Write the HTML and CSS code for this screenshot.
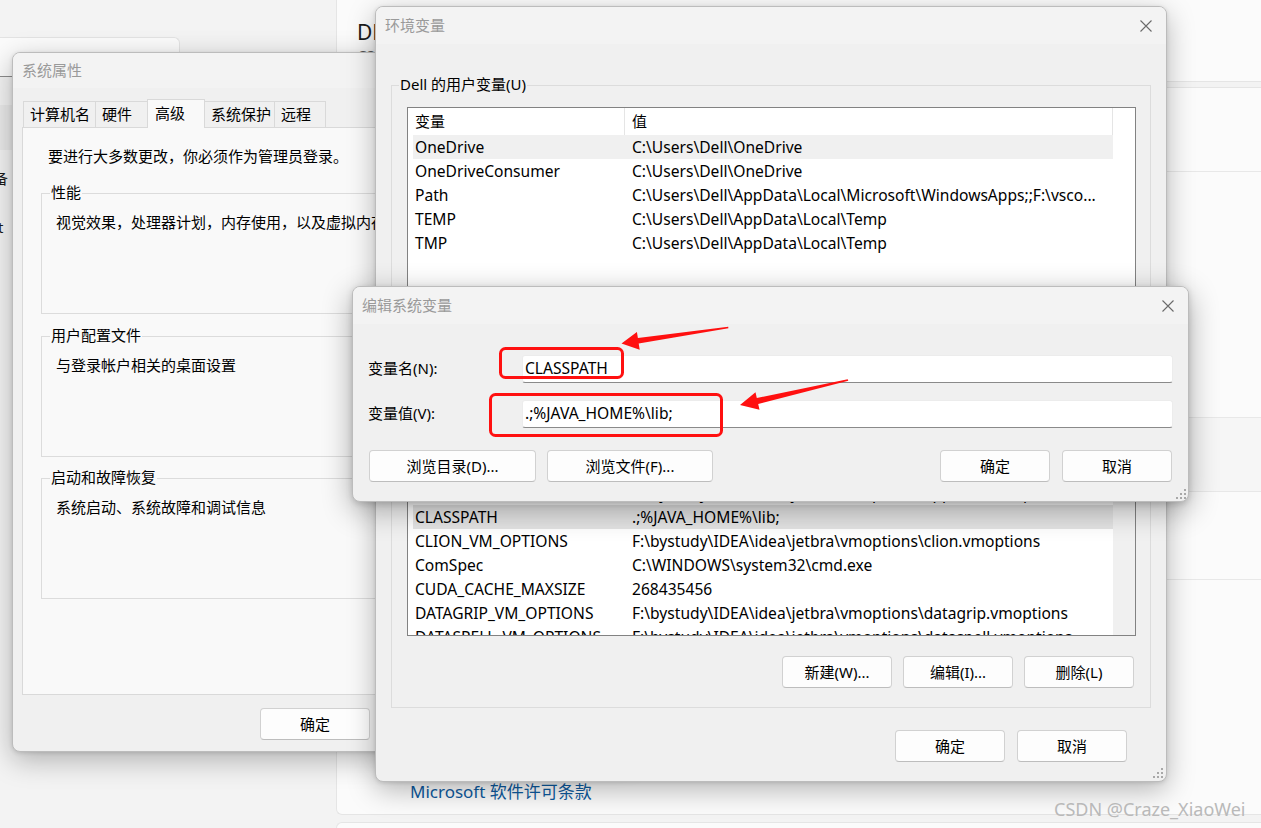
FILE: index.html
```html
<!DOCTYPE html>
<html lang="zh-CN">
<head>
<meta charset="utf-8">
<title>环境变量</title>
<link rel="stylesheet" href="styles.css">
</head>
<body>
<div class="screen">
  <div class="settings">
    <aside class="nav">
      <div class="search"></div>
      <div class="nav-sel"></div>
      <div class="nav-text a">备</div>
      <div class="nav-text b">t</div>
    </aside>
    <main class="main">
      <section class="card dev">
        <div class="dev-name">DESKTOP-8K2L0QF</div>
        <div class="dev-sub">G3 3590</div>
      </section>
      <section class="card spec">
        <div class="spec-row r1"></div>
        <div class="spec-row r2"></div>
        <div class="spec-row r3"></div>
        <div class="spec-row r4"></div>
        <div class="spec-row r5 link-row"><span class="link">Microsoft 软件许可条款</span></div>
      </section>
      <section class="card next"></section>
    </main>
  </div>

  <!-- 系统属性 -->
  <div class="win sp">
    <div class="titlebar sp-title"><span>系统属性</span></div>
    <div class="sp-body">
      <div class="tabs">
        <div class="tab t1">计算机名</div>
        <div class="tab t2">硬件</div>
        <div class="tab t3 sel">高级</div>
        <div class="tab t4">系统保护</div>
        <div class="tab t5">远程</div>
      </div>
      <div class="tab-panel">
        <div class="note">要进行大多数更改，你必须作为管理员登录。</div>
        <div class="grp g1">
          <div class="grp-label">性能</div>
          <div class="grp-text">视觉效果，处理器计划，内存使用，以及虚拟内存</div>
        </div>
        <div class="grp g2">
          <div class="grp-label">用户配置文件</div>
          <div class="grp-text">与登录帐户相关的桌面设置</div>
        </div>
        <div class="grp g3">
          <div class="grp-label">启动和故障恢复</div>
          <div class="grp-text">系统启动、系统故障和调试信息</div>
        </div>
      </div>
      <div class="sp-buttons">
        <div class="btn">确定</div>
        <div class="btn">取消</div>
        <div class="btn">应用(A)</div>
      </div>
    </div>
  </div>

  <!-- 环境变量 -->
  <div class="win env">
    <div class="titlebar"><span>环境变量</span>
      <svg class="x" viewBox="0 0 12 12"><path d="M0.5 0.5L11.5 11.5M11.5 0.5L0.5 11.5" stroke="#6a6a6a" stroke-width="1.1" fill="none"/></svg>
    </div>
    <div class="env-body">
      <div class="egrp eg1">
        <div class="egrp-label">Dell 的用户变量(U)</div>
        <div class="lv user">
          <div class="lv-main">
            <div class="lv-head"><div class="lv-h1">变量</div><div class="lv-h2">值</div></div>
            <div class="lv-body">
              <div class="lv-row sel"><span class="c1">OneDrive</span><span class="c2">C:\Users\Dell\OneDrive</span></div>
              <div class="lv-row"><span class="c1">OneDriveConsumer</span><span class="c2">C:\Users\Dell\OneDrive</span></div>
              <div class="lv-row"><span class="c1">Path</span><span class="c2">C:\Users\Dell\AppData\Local\Microsoft\WindowsApps;;F:\vsco...</span></div>
              <div class="lv-row"><span class="c1">TEMP</span><span class="c2">C:\Users\Dell\AppData\Local\Temp</span></div>
              <div class="lv-row"><span class="c1">TMP</span><span class="c2">C:\Users\Dell\AppData\Local\Temp</span></div>
            </div>
          </div>
          <div class="lv-scroll"></div>
        </div>
        <div class="grp-buttons">
          <div class="btn">新建(N)...</div>
          <div class="btn">编辑(E)...</div>
          <div class="btn">删除(D)</div>
        </div>
      </div>
      <div class="egrp eg2">
        <div class="egrp-label">系统变量(S)</div>
        <div class="lv sys">
          <div class="lv-main">
            <div class="lv-head"><div class="lv-h1">变量</div><div class="lv-h2">值</div></div>
            <div class="lv-body">
              <div class="lv-row"><span class="c1">ALLUSERSPROFILE</span><span class="c2">C:\ProgramData</span></div>
              <div class="lv-row"><span class="c1">ANDROID_HOME</span><span class="c2">F:\Android\Sdk</span></div>
              <div class="lv-row"><span class="c1">APPCODE_VM_OPTIONS</span><span class="c2">F:\bystudy\IDEA\idea\jetbra\vmoptions\appcode.vmoptions</span></div>
              <div class="lv-row sel2"><span class="c1">CLASSPATH</span><span class="c2">.;%JAVA_HOME%\lib;</span></div>
              <div class="lv-row"><span class="c1">CLION_VM_OPTIONS</span><span class="c2">F:\bystudy\IDEA\idea\jetbra\vmoptions\clion.vmoptions</span></div>
              <div class="lv-row"><span class="c1">ComSpec</span><span class="c2">C:\WINDOWS\system32\cmd.exe</span></div>
              <div class="lv-row"><span class="c1">CUDA_CACHE_MAXSIZE</span><span class="c2">268435456</span></div>
              <div class="lv-row"><span class="c1">DATAGRIP_VM_OPTIONS</span><span class="c2">F:\bystudy\IDEA\idea\jetbra\vmoptions\datagrip.vmoptions</span></div>
              <div class="lv-row"><span class="c1">DATASPELL_VM_OPTIONS</span><span class="c2">F:\bystudy\IDEA\idea\jetbra\vmoptions\dataspell.vmoptions</span></div>
            </div>
          </div>
          <div class="lv-scroll"></div>
        </div>
        <div class="grp-buttons">
          <div class="btn">新建(W)...</div>
          <div class="btn">编辑(I)...</div>
          <div class="btn">删除(L)</div>
        </div>
      </div>
      <div class="dlg-buttons env-buttons">
        <div class="btn">确定</div>
        <div class="btn">取消</div>
      </div>
    </div>
    <svg class="grip env-grip" viewBox="0 0 12 12"><g fill="#a8a8a8"><rect x="9" y="1" width="2" height="2"/><rect x="5" y="5" width="2" height="2"/><rect x="9" y="5" width="2" height="2"/><rect x="1" y="9" width="2" height="2"/><rect x="5" y="9" width="2" height="2"/><rect x="9" y="9" width="2" height="2"/></g></svg>
  </div>

  <!-- 编辑系统变量 -->
  <div class="win edit">
    <div class="titlebar"><span>编辑系统变量</span>
      <svg class="x" viewBox="0 0 12 12"><path d="M0.5 0.5L11.5 11.5M11.5 0.5L0.5 11.5" stroke="#6a6a6a" stroke-width="1.1" fill="none"/></svg>
    </div>
    <div class="edit-body">
      <div class="field">
        <div class="field-label">变量名(N):</div>
        <div class="field-input">CLASSPATH</div>
      </div>
      <div class="field f2">
        <div class="field-label">变量值(V):</div>
        <div class="field-input">.;%JAVA_HOME%\lib;</div>
      </div>
      <div class="edit-buttons">
        <div class="btn wide1">浏览目录(D)...</div>
        <div class="btn wide2">浏览文件(F)...</div>
        <div class="spacer"></div>
        <div class="btn">确定</div>
        <div class="btn">取消</div>
      </div>
    </div>
    <svg class="grip edit-grip" viewBox="0 0 12 12"><g fill="#a8a8a8"><rect x="9" y="1" width="2" height="2"/><rect x="5" y="5" width="2" height="2"/><rect x="9" y="5" width="2" height="2"/><rect x="1" y="9" width="2" height="2"/><rect x="5" y="9" width="2" height="2"/><rect x="9" y="9" width="2" height="2"/></g></svg>
  </div>

  <svg class="marks" viewBox="0 0 1261 828" width="1261" height="828">
    <rect x="500.5" y="348.5" width="122" height="29" rx="5" fill="none" stroke="#ff1010" stroke-width="3"/>
    <rect x="490.5" y="394.5" width="231" height="41" rx="5" fill="none" stroke="#ff1010" stroke-width="3"/>
    <polygon fill="#ff1010" points="621.5,343.5 639.7,349.7 638.7,343.6 728.4,328.2 728.2,326.8 637.9,338 636.9,331.9"/>
    <polygon fill="#ff1010" points="740,405 759.5,409.8 758.2,403.9 848.3,380.8 847.7,379.2 756.8,398.1 755.5,392.2"/>
  </svg>

  <div class="wm">CSDN @Craze_XiaoWei</div>
</div>
</body>
</html>
```

FILE: styles.css
```css
html, body {
  margin: 0;
  padding: 0;
}
body {
  width: 1261px;
  height: 828px;
  overflow: hidden;
  font-family: "Noto Sans", "Noto Sans CJK SC", sans-serif;
  font-size: 15px;
  color: #000;
  background: #f3f3f3;
}
.screen {
  position: relative;
  width: 1261px;
  height: 828px;
  overflow: hidden;
}

/* ---------- background settings app ---------- */
.settings {
  display: flex;
  height: 100%;
}
.nav {
  width: 336px;
  flex: none;
  padding-top: 37px;
  box-sizing: border-box;
}
.search {
  width: 180px;
  height: 40px;
  box-sizing: border-box;
  background: #fbfbfb;
  border: 1px solid #e3e3e3;
  border-left: 0;
  border-bottom: 1px solid #8c8c8c;
  border-top-right-radius: 6px;
}
.nav-sel {
  margin-top: 28px;
  width: 200px;
  height: 45px;
  background: #eaeaea;
  border-radius: 0 5px 5px 0;
}
.nav-text {
  line-height: 20px;
  color: #1a1a1a;
  white-space: nowrap;
}
.nav-text.a { margin-top: 18px; margin-left: -7px; }
.nav-text.b { margin-top: 29px; margin-left: -2px; }

.main {
  flex: 1;
  display: flex;
  flex-direction: column;
}
.card {
  background: #fbfbfb;
  border: 1px solid #e5e5e5;
  border-right: 0;
  border-radius: 6px 0 0 6px;
  box-sizing: border-box;
  flex: none;
}
.dev {
  margin-top: -10px;
  height: 92px;
  padding: 27px 0 0 20px;
}
.dev-name {
  font-size: 21px;
  line-height: 28px;
  color: #1b1b1b;
  white-space: nowrap;
}
.dev-sub {
  font-size: 14px;
  line-height: 20px;
  color: #5d5d5d;
}
.spec {
  margin-top: 5px;
  height: 728px;
  display: flex;
  flex-direction: column;
}
.spec-row {
  box-sizing: border-box;
  border-bottom: 1px solid #e8e8e8;
  flex: none;
}
.r1 { height: 84px; }
.r2 { height: 246px; }
.r3 { height: 74px; background: #f6f6f6; }
.r4 { height: 88px; }
.r5 { flex: 1; border-bottom: 0; }
.link-row {
  display: flex;
  align-items: flex-end;
  padding: 0 0 10px 73px;
}
.link {
  font-size: 17px;
  line-height: 24px;
  color: #0e5a9e;
  white-space: nowrap;
}
.next {
  margin-top: 7px;
  height: 40px;
}

/* ---------- windows ---------- */
.win {
  position: absolute;
  box-sizing: border-box;
  background: #f0f0f0;
  border: 1px solid #bcbcbc;
  border-radius: 8px;
  box-shadow: 0 8px 28px rgba(0, 0, 0, 0.28), 0 1px 4px rgba(0, 0, 0, 0.12);
  overflow: hidden;
  display: flex;
  flex-direction: column;
}
.sp { left: 12px; top: 52px; width: 620px; height: 700px; }
.env { left: 375px; top: 6px; width: 792px; height: 776px; }
.edit { left: 352px; top: 286px; width: 837px; height: 216px; box-shadow: 0 8px 30px rgba(0, 0, 0, 0.32), 0 2px 6px rgba(0, 0, 0, 0.14); }

.titlebar {
  flex: none;
  box-sizing: border-box;
  height: 37px;
  background: #f3f3f3;
  display: flex;
  align-items: center;
  justify-content: space-between;
  padding: 0 14px 3px 9px;
  color: #9a9a9a;
  font-size: 15px;
}
.titlebar .x { margin-top: 3px; }
.sp-title { height: 35px; }
.x {
  width: 12px;
  height: 12px;
  display: block;
}
.grip {
  position: absolute;
  width: 12px;
  height: 12px;
}
.env-grip { right: 2px; bottom: 2px; }
.edit-grip { right: 1px; bottom: 1px; }

.btn {
  box-sizing: border-box;
  width: 110px;
  height: 32px;
  flex: none;
  background: #fdfdfd;
  border: 1px solid #d1d1d1;
  border-bottom-color: #bdbdbd;
  border-radius: 4px;
  display: flex;
  align-items: center;
  justify-content: center;
  padding-bottom: 1px;
  white-space: nowrap;
  color: #000;
}

/* ---------- system properties ---------- */
.sp-body {
  padding: 11px 9px 0 9px;
  display: flex;
  flex-direction: column;
}
.tabs {
  display: flex;
  align-items: flex-end;
  height: 28px;
  padding-left: 1px;
}
.tab {
  box-sizing: border-box;
  height: 26px;
  border: 1px solid #d9d9d9;
  border-bottom: 0;
  margin-right: -1px;
  padding: 0 0 2px 6px;
  display: flex;
  align-items: center;
  background: #f0f0f0;
  white-space: nowrap;
}
.tab.sel {
  height: 29px;
  margin-bottom: -1px;
  position: relative;
  z-index: 1;
  background: #f9f9f9;
  padding-left: 7px;
  padding-bottom: 4px;
}
.t1 { width: 73px; }
.t2 { width: 53px; }
.t3 { width: 58px; }
.t4 { width: 71px; }
.t5 { width: 52px; }
.tab-panel {
  box-sizing: border-box;
  height: 568px;
  background: #f9f9f9;
  border: 1px solid #d9d9d9;
  padding: 18px 18px 0 18px;
}
.note {
  padding-left: 7px;
  line-height: 20px;
  white-space: nowrap;
}
.grp {
  box-sizing: border-box;
  height: 121px;
  border: 1px solid #dcdcdc;
  padding: 0 8px;
}
.g1 { margin-top: 27px; }
.g2 { margin-top: 22px; }
.g3 { margin-top: 21px; }
.grp-label {
  width: fit-content;
  margin-top: -12px;
  padding: 0 1px;
  line-height: 20px;
  background: #f9f9f9;
}
.grp-text {
  margin-top: 10px;
  padding-left: 6px;
  line-height: 20px;
  white-space: nowrap;
}
.sp-buttons {
  margin-top: 13px;
  display: flex;
  justify-content: flex-end;
  gap: 12px;
  padding-right: 8px;
}

/* ---------- environment variables ---------- */
.env-body {
  padding: 0 15px 19px 15px;
  display: flex;
  flex-direction: column;
}
.egrp {
  border: 1px solid #dcdcdc;
  padding: 0 14px 19px 15px;
}
.eg1 { margin-top: 41px; }
.eg2 { margin-top: 18px; }
.egrp-label {
  width: fit-content;
  margin: -12px 0 0 -8px;
  padding: 0 1px;
  line-height: 20px;
  background: #f0f0f0;
  white-space: nowrap;
}
.lv {
  margin-top: 13px;
  box-sizing: border-box;
  border: 1px solid #828282;
  background: #fff;
  display: flex;
  overflow: hidden;
}
.lv.user { height: 186px; }
.lv.sys { height: 231px; }
.lv-main {
  width: 705px;
  flex: none;
}
.lv-scroll { flex: 1; }
.lv.sys .lv-scroll { background: #f0f0f0; }
.lv-head {
  display: flex;
  height: 27px;
  line-height: 27px;
  background: #fff;
}
.lv-h1 {
  width: 217px;
  box-sizing: border-box;
  padding-left: 7px;
  border-right: 1px solid #e5e5e5;
}
.lv-h2 {
  flex: 1;
  padding-left: 7px;
  border-right: 1px solid #e5e5e5;
}
.lv-body { padding-left: 5px; }
.lv-row {
  display: grid;
  grid-template-columns: 212px 488px;
  height: 24px;
  line-height: 24px;
  white-space: nowrap;
  overflow: hidden;
  font-size: 15.6px;
}
.lv-row.sel { background: #f0f0f0; }
.lv-row.sel2 { background: #e4e4e4; }
.c1 { padding-left: 2px; overflow: hidden; }
.c2 { padding-left: 7px; overflow: hidden; }
.grp-buttons {
  margin-top: 20px;
  display: flex;
  justify-content: flex-end;
  gap: 11px;
  padding-right: 2px;
}
.dlg-buttons {
  display: flex;
  justify-content: flex-end;
  gap: 12px;
}
.env-buttons {
  margin-top: 22px;
  margin-right: 24px;
}

/* ---------- edit dialog ---------- */
.edit-body {
  padding: 31px 15px 19px 15px;
  display: flex;
  flex-direction: column;
}
.field {
  display: flex;
  align-items: center;
  height: 28px;
}
.f2 { margin-top: 17px; }
.field-label {
  width: 154px;
  flex: none;
  padding-bottom: 4px;
  white-space: nowrap;
}
.field-input {
  flex: 1;
  box-sizing: border-box;
  height: 28px;
  background: #fff;
  border: 1px solid #ececec;
  border-bottom-color: #8a8a8a;
  border-radius: 3px;
  padding-left: 2px;
  line-height: 24px;
  font-size: 15.6px;
  white-space: nowrap;
}
.edit-buttons {
  margin-top: 22px;
  display: flex;
  gap: 11px;
  padding: 0 1px;
}
.edit-buttons .spacer { flex: 1; }
.wide1 { width: 167px; }
.wide2 { width: 166px; }
.edit-buttons .btn + .btn:last-child { margin-left: 1px; }

/* ---------- overlays ---------- */
.marks {
  position: absolute;
  left: 0;
  top: 0;
  pointer-events: none;
}
.wm {
  position: absolute;
  left: 1054px;
  top: 797px;
  font-family: "Noto Sans", sans-serif;
  font-size: 18px;
  line-height: 24px;
  color: #b9b9b9;
  white-space: nowrap;
}
```
